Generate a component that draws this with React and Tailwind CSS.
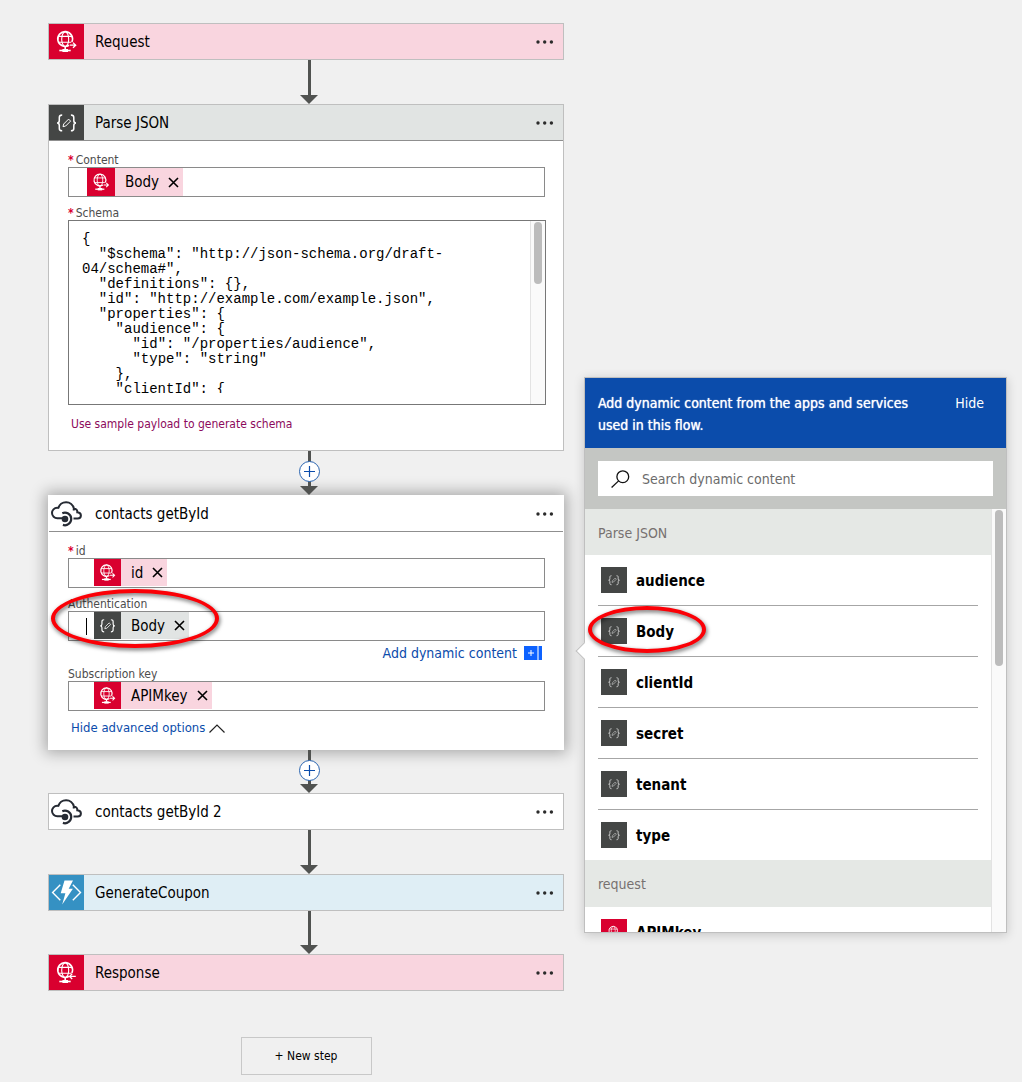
const schemaText = `{
  "$schema": "http://json-schema.org/draft-04/schema#",
  "definitions": {},
  "id": "http://example.com/example.json",
  "properties": {
    "audience": {
      "id": "/properties/audience",
      "type": "string"
    },
    "clientId": {
      "id": "/properties/clientId",
      "type": "string"
    }
  }
}`;

function GlobeIcon({ back = false, className }) {
  return (
    <svg viewBox="0 0 35 35" className={className} fill="none" stroke="#fff" strokeWidth="1.1" aria-hidden="true">
      <path d="M20 21.300a7.400 7.400 0 1 1 2.900-3.300" strokeWidth="1.600" />
      <path d="M9.300 12.400h13.800M9.300 18.200h13" />
      <ellipse cx="16.200" cy="15.200" rx="3.500" ry="7.300" />
      {back ? <path d="M26.800 21.400h-6M23.200 18.800l-2.600 2.600 2.600 2.600" strokeWidth="1.300" /> : <path d="M20.800 21.200h6M24 18.600l2.700 2.600-2.700 2.600" strokeWidth="1.300" />}
      <path d="M16.200 22.500v3" strokeWidth="1.600" />
      <path d="M10.300 26.500h11.400" strokeWidth="1.600" />
      <path d="M13.400 26.500h5.600" strokeWidth="3" />
    </svg>
  );
}

function JsonIcon({ className }) {
  return (
    <svg viewBox="0 0 35 35" className={className} fill="none" stroke="#fff" strokeWidth="1.500" aria-hidden="true">
      <path d="M13.200 10c-2.200 0-2.900.8-2.900 2.400v3c0 1.600-.6 2.500-2.200 2.500 1.600 0 2.200.9 2.200 2.500v3c0 1.600.7 2.400 2.900 2.400M21.900 10c2.200 0 2.900.8 2.900 2.400v3c0 1.600.6 2.500 2.200 2.500-1.600 0-2.200.9-2.200 2.500v3c0 1.600-.7 2.400-2.900 2.400" />
      <path d="M14 21.700l.7-2.700 4.900-4.900 2 2-4.900 4.900z" strokeWidth="1" />
    </svg>
  );
}

function CloudIcon({ className }) {
  return (
    <svg viewBox="0 0 35 35" className={className} fill="none" stroke="#252a33" strokeWidth="2" aria-hidden="true">
      <path d="M14 22.300H8.400a5.300 5.300 0 0 1-.2-10.600c.6 0 1.200.1 1.800.3M9.300 12.300a8 8 0 0 1 15.600 0.200c0 1-.2 1.500-.4 2M24.600 12.700c2.600-.2 3.900 1.500 3.700 3.600 2.300.3 3.600 1.500 3.600 3.200 0 1.900-1.400 2.900-3.300 2.900h-4.100" />
      <path d="M13.300 17.200a6.300 6.300 0 1 1 .6 11.700" strokeWidth="2.200" />
      <circle cx="16" cy="23" r="3.300" fill="#252a33" stroke="none" />
    </svg>
  );
}

function FunctionIcon({ className }) {
  return (
    <svg viewBox="0 0 35 35" className={className} fill="none" stroke="#fff" strokeWidth="1.400" aria-hidden="true">
      <path d="M11.300 9.800l-7.700 7.700 7.700 7.700M23.800 9.800l7.700 7.700-7.700 7.700" />
      <path d="M15.500 5.500h8.500l-4.300 8.200h4.200L13.200 29.500l3.200-11.300h-4.700z" fill="#fff" stroke="none" />
    </svg>
  );
}

function Down({ plus = false, short = false }) {
  return (
    <div className={short ? "relative flex h-[43px] flex-col items-center pl-1.5" : "relative flex h-11 flex-col items-center pl-1.5"}>
      <div className="w-[3px] flex-1 bg-[#505250]" />
      <svg viewBox="0 0 18 9" className="h-[9px] w-[18px]" aria-hidden="true"><path d="M0 0h18L9 9z" fill="#505250" /></svg>
      {plus && (
        <button type="button" aria-label="Insert step" className="absolute top-2.5 flex size-[21px] items-center justify-center rounded-full border border-[#2a64b0] bg-white">
          <svg viewBox="0 0 11 11" className="size-[11px]" stroke="#0b4cab" strokeWidth="1.200"><path d="M5.500 0v11M0 5.500h11" /></svg>
        </button>
      )}
    </div>
  );
}

function Header({ icon, iconClass, barClass, title, line = false }) {
  return (
    <div className={line ? "flex h-9 items-center border-b border-[#8f8f8f] " + barClass : "flex h-[35px] items-center " + barClass}>
      <div className={"size-[35px] shrink-0 " + iconClass}>{icon}</div>
      <h2 className="flex-1 pl-[11px] pt-0.5 text-[15px]">{title}</h2>
      <button type="button" aria-label={title + " menu"} className="mr-2 flex h-6 w-5 items-center">
        <svg viewBox="0 0 20 4" className="h-1 w-5" fill="#2b2b2b"><circle cx="3" cy="2" r="1.700" /><circle cx="9.700" cy="2" r="1.700" /><circle cx="16.400" cy="2" r="1.700" /></svg>
      </button>
    </div>
  );
}

function Step(props) {
  return (
    <section className="border border-[#bfbfbf]"><Header {...props} /></section>
  );
}

function Token({ json = false, label, big = false }) {
  return (
    <span className={json ? "flex h-full items-center bg-[#e1e4e3]" : "flex h-full items-center bg-[#f9d5df]"}>
      <span className={(big ? "size-7 " : "size-[27px] ") + (json ? "bg-[#444645]" : "bg-[#d9002f]")}>
        {json ? <JsonIcon className="size-full" /> : <GlobeIcon className="size-full" />}
      </span>
      <span className="pl-2.5 pt-px text-[15px]">{label}</span>
      <button type="button" aria-label={"Remove " + label} className="ml-[9px] mr-1">
        <svg viewBox="0 0 11 11" className="size-[11px]" stroke="#000" strokeWidth="1.600"><path d="M1 1l9 9M10 1l-9 9" /></svg>
      </button>
    </span>
  );
}

function FieldLabel({ id, required = false, children }) {
  return (
    <label htmlFor={id} className="flex h-4 items-center pt-px text-xs leading-4 text-[#4d4d4d]">
      {required && <span className="mr-0.5 font-bold text-[#d9002f]">*</span>}
      {children}
    </label>
  );
}

function Field({ id, label, required, token, caret = false, big = false }) {
  return (
    <div>
      <FieldLabel id={id} required={required}>{label}</FieldLabel>
      <div className={big ? "flex h-[30px] border border-[#8a8a8a] bg-white pl-[18px]" : "flex h-[30px] border border-[#8a8a8a] bg-white pb-px pl-[25px]"}>
        {caret && <span className="-ml-2 mr-[7px] mt-1.5 h-[17px] w-px bg-black" />}
        {token}
        <input id={id} className="min-w-0 flex-1 bg-transparent outline-none" />
      </div>
    </div>
  );
}

function Item({ name, globe = false, last = false, circled = false }) {
  return (
    <li className={last ? "relative mx-[13px] h-[50px]" : "relative mx-[13px] h-[51px] border-b border-[#a6a6a6]"}>
      <button type="button" className="flex h-full w-full items-center pl-[3px] text-left text-[15px] font-bold">
        <span className={globe ? "mr-[9px] flex size-[26px] items-center justify-center bg-[#d9002f]" : "mr-[9px] flex size-[26px] items-center justify-center bg-[#444645]"}>
          {globe ? <GlobeIcon className="size-5" /> : <JsonIcon className="size-5 opacity-80" />}
        </span>
        <span className="pt-0.5">{name}</span>
      </button>
      {circled && <Ring className="-left-2.5 top-0 h-[47px] w-[118px]" />}
    </li>
  );
}

function Ring({ className }) {
  return <span className={"pointer-events-none absolute z-10 rounded-[50%] border-4 border-[#fb0006] drop-shadow-[1px_2px_2px_rgba(0,0,0,0.6)] " + className} />;
}

export default function App() {
  const red = "bg-[#d9002f]";
  const pink = "bg-[#f9d5df]";
  return (
    <div className="flex min-h-screen items-start gap-5 bg-[#f0f0f0] pb-[7px] pl-12 pr-[15px] pt-[23px] font-['DejaVu_Sans_Condensed','DejaVu_Sans',sans-serif] text-black">
      <main className="min-w-0 flex-1">
        <Step icon={<GlobeIcon />} iconClass={red} barClass={pink} title="Request" />
        <Down />
        <section className="border border-[#bfbfbf] bg-white">
          <Header icon={<JsonIcon />} iconClass="bg-[#444645]" barClass="bg-[#e1e4e3]" title="Parse JSON" line />
          <div className="pb-[18px] pl-[19px] pr-[17px] pt-2.5">
            <div className="mr-px">
              <Field id="content" label="Content" required big token={<Token label="Body" big />} />
            </div>
            <div className="mt-[7px]">
              <FieldLabel id="schema" required>Schema</FieldLabel>
              <div className="flex h-[185px] border border-[#777]">
                <textarea id="schema" spellCheck="false" defaultValue={schemaText} className="mt-[11px] h-[161px] min-w-0 flex-1 resize-none overflow-hidden bg-transparent pl-[13px] pr-2.5 font-['Liberation_Mono',monospace] text-sm leading-[15px] outline-none" />
                <div className="flex w-[15px] justify-center border-l border-[#e3e3e3] bg-[#fafafa] pt-px">
                  <div className="h-[62px] w-2 rounded-full bg-[#bcbcbc]" />
                </div>
              </div>
            </div>
            <a href="#sample" className="ml-[3px] mt-[11px] block text-xs leading-4 text-[#8c0a5c]">Use sample payload to generate schema</a>
          </div>
        </section>
        <Down plus />
        <section className="border border-white bg-white shadow-[0_0_14px_3px_rgba(0,0,0,0.3)]">
          <Header icon={<CloudIcon />} iconClass="" barClass="" title="contacts getById" line />
          <div className="pb-3 pl-[19px] pr-[18px] pt-2.5">
            <Field id="contact-id" label="id" required token={<Token label="id" />} />
            <div className="relative mt-[7px]">
              <Field id="auth" label="Authentication" caret token={<Token label="Body" json />} />
              <Ring className="-left-[17px] -top-1.5 h-[59px] w-[168px]" />
            </div>
            <div className="flex h-6 items-center justify-end pr-[3px]">
              <a href="#dynamic" className="flex items-center gap-[7px] text-sm text-[#0b4cab]">
                Add dynamic content
                <svg viewBox="0 0 18 14" className="h-3.5 w-[18px]" aria-hidden="true"><path d="M0 0h13v14H0zM15 0h3v14h-3z" fill="#0d62ff" /><path d="M13 0h2v14h-2z" fill="#8fb8ff" /><path d="M7 4v6M4 7h6" stroke="#fff" /></svg>
              </a>
            </div>
            <Field id="subscription" label="Subscription key" token={<Token label="APIMkey" />} />
            <a href="#advanced" className="ml-[3px] mt-2 flex items-center gap-1 text-[13px] leading-[18px] text-[#0b4cab]">
              Hide advanced options
              <svg viewBox="0 0 16 9" className="h-[9px] w-4" fill="none" stroke="#222" strokeWidth="1.200" aria-hidden="true"><path d="M.5 8.500L8 1l7.500 7.500" /></svg>
            </a>
          </div>
        </section>
        <Down plus short />
        <Step icon={<CloudIcon />} iconClass="" barClass="bg-white" title="contacts getById 2" />
        <Down />
        <Step icon={<FunctionIcon />} iconClass="bg-[#3591c3]" barClass="bg-[#dfeef5]" title="GenerateCoupon" />
        <Down short />
        <Step icon={<GlobeIcon back />} iconClass={red} barClass={pink} title="Response" />
        <div className="mt-[46px] flex justify-center">
          <button type="button" className="h-[38px] w-[131px] border border-[#c8c8c8] text-xs">+ New step</button>
        </div>
      </main>

      <aside className="relative mt-[354px] w-[423px] shrink-0 border border-[#bfbfbf] bg-white shadow-[0_2px_10px_rgba(0,0,0,0.18)]">
        <span className="absolute -left-[7px] top-[267px] size-3 rotate-45 border-b border-l border-[#bfbfbf] bg-white" />
        <div className="relative flex h-[70px] items-start justify-between bg-[#0b4cab] pl-[13px] pr-[22px] pt-3.5 text-sm leading-[22px] text-white [text-shadow:0_0_1px_#fff]">
          <p className="w-[320px]">Add dynamic content from the apps and services used in this flow.</p>
          <button type="button">Hide</button>
        </div>
        <div className="relative bg-[#c4c6c3] px-[13px] py-[13px]">
          <label htmlFor="search" className="flex h-[35px] items-center bg-white pl-[13px]">
            <svg viewBox="0 0 19 18" className="mr-3 h-[18px] w-[19px]" fill="none" stroke="#111" strokeWidth="1.300" aria-hidden="true"><circle cx="11.800" cy="6.700" r="5.900" /><path d="M7.600 10.900L.6 17.500" /></svg>
            <input id="search" placeholder="Search dynamic content" className="min-w-0 flex-1 text-sm outline-none placeholder:text-[#6b6b6b]" />
          </label>
        </div>
        <div className="relative flex h-[423px] overflow-hidden">
          <div className="min-w-0 flex-1">
            <h3 className="flex h-[46px] items-center bg-[#e5e8e5] pl-[13px] pt-px text-sm text-[#777170]">Parse JSON</h3>
            <ul>
              <Item name="audience" />
              <Item name="Body" circled />
              <Item name="clientId" />
              <Item name="secret" />
              <Item name="tenant" />
              <Item name="type" last />
            </ul>
            <h3 className="flex h-[47px] items-center bg-[#e5e8e5] pl-[13px] text-sm text-[#777170]">request</h3>
            <ul>
              <Item name="APIMkey" globe last />
            </ul>
          </div>
          <div className="flex w-[15px] justify-center border-l border-[#e3e3e3] bg-[#fafafa] pt-px">
            <div className="h-[156px] w-2 rounded-full bg-[#bcbcbc]" />
          </div>
        </div>
      </aside>
    </div>
  );
}
